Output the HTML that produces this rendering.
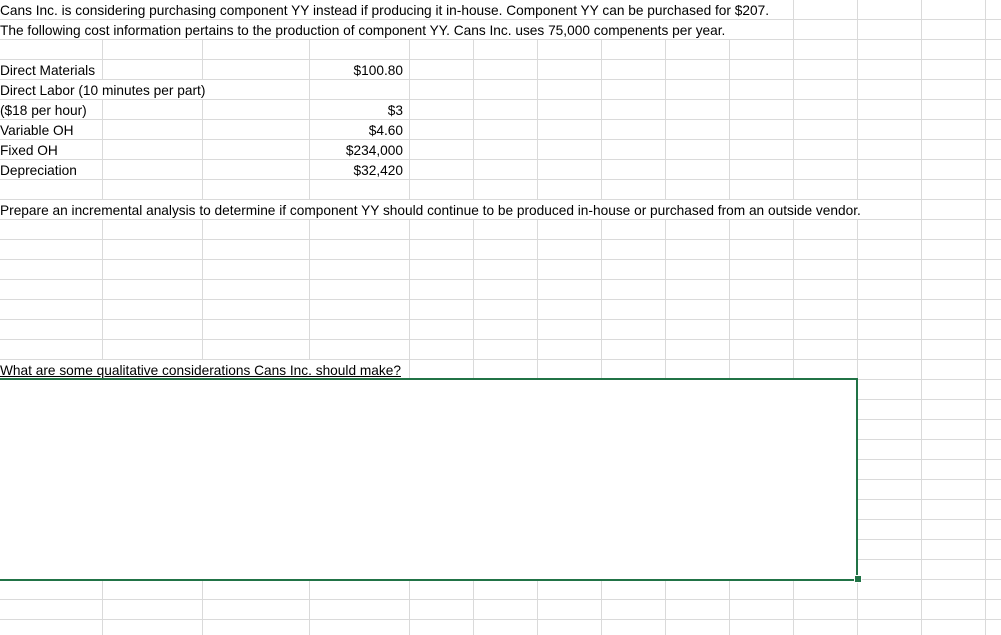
<!DOCTYPE html>
<html><head><style>
body{margin:0;width:1001px;height:635px;overflow:hidden;background:#fff;position:relative;font-family:"Liberation Sans",sans-serif;font-size:13.7px;color:#000}
.hl{position:absolute;left:0;top:0;width:1001px;height:635px;background:repeating-linear-gradient(180deg,transparent 0 19px,#dadada 19px 20px)}
.vl{position:absolute;top:0;width:1px;height:635px;background:#dadada}
.t{position:absolute;height:19px;line-height:19px;background:#fff;white-space:nowrap;padding-top:1px;box-sizing:border-box}
.r{position:absolute;height:19px;line-height:19px;text-align:right;white-space:nowrap;padding-top:1px;box-sizing:border-box}
.box{position:absolute;left:-2px;top:378px;width:856px;height:199px;border:2px solid #217346;background:#fff}
.h{position:absolute;left:854px;top:575px;width:6px;height:6px;background:#217346;border:1px solid #fff}
</style></head><body>
<div class="hl"></div>
<div class="vl" style="left:102px"></div><div class="vl" style="left:202px"></div><div class="vl" style="left:309px"></div>
<div class="vl" style="left:409px"></div><div class="vl" style="left:473px"></div><div class="vl" style="left:537px"></div>
<div class="vl" style="left:601px"></div><div class="vl" style="left:665px"></div><div class="vl" style="left:729px"></div>
<div class="vl" style="left:793px"></div><div class="vl" style="left:857px"></div><div class="vl" style="left:921px"></div>
<div class="vl" style="left:985px"></div>
<div class="t" style="left:0;top:0;width:792px">Cans Inc. is considering purchasing component YY instead if producing it in-house. Component YY can be purchased for $207.</div>
<div class="t" style="left:0;top:20px;width:792px">The following cost information pertains to the production of component YY. Cans Inc. uses 75,000 compenents per year.</div>
<div class="t" style="left:0;top:60px;width:100px">Direct Materials</div>
<div class="r" style="left:309px;top:60px;width:94px">$100.80</div>
<div class="t" style="left:0;top:80px;width:208px">Direct Labor (10 minutes per part)</div>
<div class="t" style="left:0;top:100px;width:100px">($18 per hour)</div>
<div class="r" style="left:309px;top:100px;width:94px">$3</div>
<div class="t" style="left:0;top:120px;width:100px">Variable OH</div>
<div class="r" style="left:309px;top:120px;width:94px">$4.60</div>
<div class="t" style="left:0;top:140px;width:100px">Fixed OH</div>
<div class="r" style="left:309px;top:140px;width:94px">$234,000</div>
<div class="t" style="left:0;top:160px;width:100px">Depreciation</div>
<div class="r" style="left:309px;top:160px;width:94px">$32,420</div>
<div class="t" style="left:0;top:200px;width:920px">Prepare an incremental analysis to determine if component YY should continue to be produced in-house or purchased from an outside vendor.</div>
<div class="t" style="left:0;top:360px;width:408px;text-decoration:underline">What are some qualitative considerations Cans Inc. should make?</div>
<div class="box"></div>
<div class="h"></div>
</body></html>
